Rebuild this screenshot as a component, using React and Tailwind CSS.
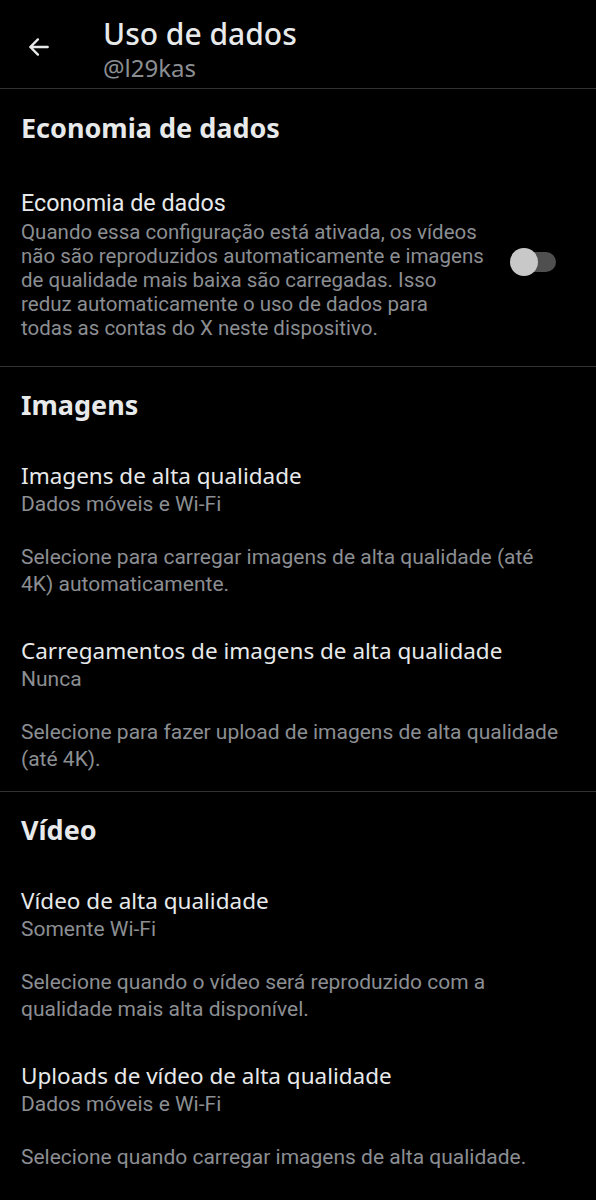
import React, { useState } from 'react';

const titleFont = { fontFamily: '"Noto Sans", Inter, sans-serif' };
const bodyFont = { fontFamily: 'Roboto, sans-serif' };

const Toggle = ({ on, onChange }) => (
    <button onClick={() => onChange(!on)} className="relative w-[46px] h-[30px] shrink-0">
        <span className="absolute left-[4px] right-0 top-[5px] h-[20px] rounded-full bg-[#4f4f4f]" />
        <span className="absolute left-0 top-[1px] w-[28px] h-[28px] rounded-full bg-[#c8c8c8]" />
    </button>
);

const SettingItem = ({ title, value, desc, className }) => (
    <div className={className}>
        <div className="text-[22.5px] leading-[28px] text-[#e7e9ea]" style={titleFont}>{title}</div>
        <div className="mt-[1px] text-[21px] leading-[26px] text-[#8b8e92]" style={bodyFont}>{value}</div>
        <div className="mt-[27px] max-w-[542px] text-[21px] leading-[27px] text-[#8b8e92]" style={bodyFont}>{desc}</div>
    </div>
);

const SectionHeader = ({ children }) => (
    <h2 className="text-[27px] leading-[34px] font-bold text-[#e7e9ea]" style={titleFont}>{children}</h2>
);

const saverLines = [
    'Quando essa configuração está ativada, os vídeos',
    'não são reproduzidos automaticamente e imagens',
    'de qualidade mais baixa são carregadas. Isso',
    'reduz automaticamente o uso de dados para',
    'todas as contas do X neste dispositivo.',
];

export default function App() {
    const [saver, setSaver] = useState(false);

    return (
        <div className="min-h-[1200px] bg-black text-white">
            {/* Header */}
            <div className="h-[89px] flex border-b border-[#2f3336]">
                <div className="w-[103px] pl-[26px] pt-[34px]">
                    <svg className="w-[26px] h-[26px] text-[#e7e9ea]" viewBox="0 0 24 24" fill="none" stroke="currentColor" strokeWidth={2.2} strokeLinecap="round" strokeLinejoin="round">
                        <path d="M20 12H4M11 5l-7 7 7 7" />
                    </svg>
                </div>
                <div className="pt-[17px]">
                    <div className="text-[30px] leading-[34px] font-medium text-[#e7e9ea]" style={titleFont}>Uso de dados</div>
                    <div className="mt-[4px] text-[24px] leading-[26px] text-[#8b8e92]" style={titleFont}>@l29kas</div>
                </div>
            </div>

            {/* Economia de dados */}
            <section className="px-[21px] pt-[22px] pb-[26px] border-b border-[#2f3336]">
                <SectionHeader>Economia de dados</SectionHeader>
                <div className="mt-[44px] flex items-center">
                    <div className="flex-1">
                        <div className="text-[23.3px] leading-[28px] text-[#e7e9ea]" style={bodyFont}>Economia de dados</div>
                        <div className="mt-[3px] text-[20.5px] leading-[24px] text-[#8b8e92]" style={bodyFont}>
                            {saverLines.map((line) => (
                                <div key={line} className="whitespace-nowrap">{line}</div>
                            ))}
                        </div>
                    </div>
                    <div className="pr-[19px]">
                        <Toggle on={saver} onChange={setSaver} />
                    </div>
                </div>
            </section>

            {/* Imagens */}
            <section className="px-[21px] pt-[21px] pb-[18px] border-b border-[#2f3336]">
                <SectionHeader>Imagens</SectionHeader>
                <SettingItem
                    className="mt-[40px]"
                    title="Imagens de alta qualidade"
                    value="Dados móveis e Wi-Fi"
                    desc="Selecione para carregar imagens de alta qualidade (até 4K) automaticamente."
                />
                <SettingItem
                    className="mt-[39px]"
                    title="Carregamentos de imagens de alta qualidade"
                    value="Nunca"
                    desc="Selecione para fazer upload de imagens de alta qualidade (até 4K)."
                />
            </section>

            {/* Vídeo */}
            <section className="px-[21px] pt-[21px] pb-[18px]">
                <SectionHeader>Vídeo</SectionHeader>
                <SettingItem
                    className="mt-[40px]"
                    title="Vídeo de alta qualidade"
                    value="Somente Wi-Fi"
                    desc="Selecione quando o vídeo será reproduzido com a qualidade mais alta disponível."
                />
                <SettingItem
                    className="mt-[39px]"
                    title="Uploads de vídeo de alta qualidade"
                    value="Dados móveis e Wi-Fi"
                    desc="Selecione quando carregar imagens de alta qualidade."
                />
            </section>
        </div>
    );
}
